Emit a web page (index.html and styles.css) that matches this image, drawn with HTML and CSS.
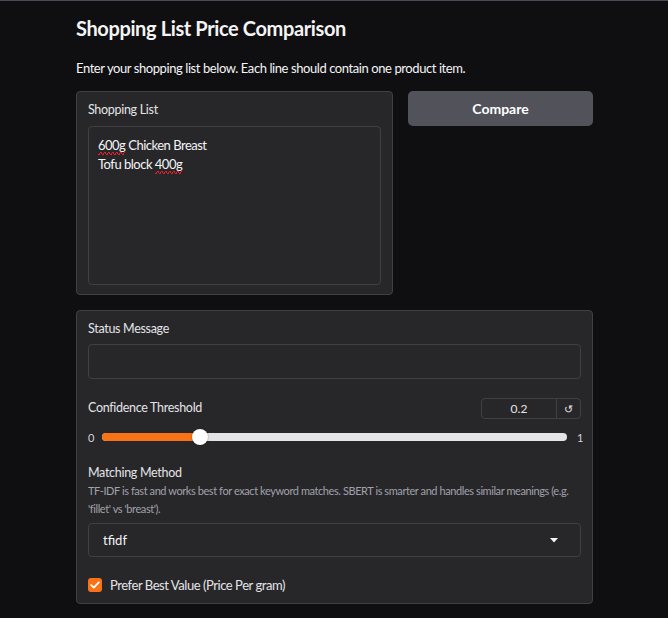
FILE: index.html
```html
<!DOCTYPE html>
<html>
<head>
<meta charset="utf-8">
<link rel="stylesheet" href="styles.css">
</head>
<body>
<div class="page">
  <div class="container">
    <h2 class="title">Shopping List Price Comparison</h2>
    <p class="desc">Enter your shopping list below. Each line should contain one product item.</p>
    <div class="row">
      <div class="block list-block">
        <div class="label">Shopping List</div>
        <div class="textarea">
          <div class="line"><span class="spell">600g</span> Chicken Breast</div>
          <div class="line">Tofu block <span class="spell">400g</span></div>
        </div>
      </div>
      <button class="compare">Compare</button>
    </div>
    <div class="block settings">
      <div class="label">Status Message</div>
      <div class="input"></div>

      <div class="conf-row">
        <div class="label conf-label">Confidence Threshold</div>
        <div class="numbox">
          <span class="num">0.2</span>
          <span class="reset">↺</span>
        </div>
      </div>
      <div class="slider-row">
        <span class="minmax">0</span>
        <div class="track">
          <div class="fill" style="width: 21%"></div>
          <div class="thumb" style="left: 21%"></div>
        </div>
        <span class="minmax">1</span>
      </div>

      <div class="label method">Matching Method</div>
      <div class="info">TF-IDF is fast and works best for exact keyword matches. SBERT is smarter and handles similar meanings (e.g. 'fillet' vs 'breast').</div>
      <div class="dropdown">
        <span>tfidf</span>
        <svg class="caret" width="8" height="5" viewBox="0 0 8 5"><path d="M0 0 H8 L4 4.5 Z" fill="#f4f4f5"/></svg>
      </div>

      <label class="check-row">
        <span class="checkbox">
          <svg width="10" height="8" viewBox="0 0 10 8"><path d="M1.2 4.2 L3.8 6.6 L8.8 1.4" fill="none" stroke="#fff" stroke-width="1.8" stroke-linecap="round" stroke-linejoin="round"/></svg>
        </span>
        <span class="check-label">Prefer Best Value (Price Per gram)</span>
      </label>
    </div>
  </div>
</div>
</body>
</html>
```

FILE: styles.css
```css
* { box-sizing: border-box; }
html, body {
  margin: 0;
  padding: 0;
  background: #0f0f11;
}
body {
  font-family: "Lato", "Noto Sans", sans-serif;
  color: #e4e4e7;
  width: 668px;
  height: 618px;
  overflow: hidden;
  border-top: 1px solid #4e4856;
}
.page {
  padding-left: 76px;
}
.container {
  width: 517px;
  display: flex;
  flex-direction: column;
}
.title {
  margin: 15px 0 0 0;
  font-size: 20px;
  line-height: 24px;
  font-weight: 700;
  letter-spacing: -0.38px;
  color: #f4f4f5;
}
.desc {
  margin: 19px 0 0 0;
  font-size: 13px;
  line-height: 18px;
  letter-spacing: -0.42px;
  color: #f4f4f5;
}
.row {
  display: flex;
  gap: 15px;
  margin-top: 14px;
  align-items: flex-start;
}
.block {
  background: #27272a;
  border: 1px solid #3f3f46;
  border-radius: 4px;
  padding: 10px 11px 9px 11px;
}
.list-block {
  width: 317px;
  height: 204px;
}
.label {
  font-size: 12.5px;
  line-height: 16px;
  letter-spacing: -0.3px;
  color: #e4e4e7;
}
.textarea {
  margin-top: 8px;
  height: 159px;
  border: 1px solid #3f3f46;
  border-radius: 4px;
  background: #27272a;
  padding: 9px 9px;
}
.line {
  font-size: 13px;
  line-height: 18px;
  letter-spacing: -0.5px;
  color: #f4f4f5;
}
.spell {
  display: inline-block;
  line-height: 16px;
  padding-bottom: 2px;
  background-image:
    linear-gradient(45deg, transparent 62%, #d9202c 62%, #d9202c 88%, transparent 88%),
    linear-gradient(135deg, transparent 62%, #d9202c 62%, #d9202c 88%, transparent 88%);
  background-size: 4px 3px;
  background-repeat: repeat-x;
  background-position: 0 100%, 2px 100%;
}
.compare {
  flex: 1;
  height: 35px;
  border: none;
  border-radius: 5px;
  background: #52525b;
  color: #ffffff;
  font-family: "Lato", "Noto Sans", sans-serif;
  font-weight: 700;
  font-size: 14px;
  padding: 0;
}
.settings {
  margin-top: 15px;
  display: flex;
  flex-direction: column;
  padding-bottom: 10px;
}
.input {
  margin-top: 7px;
  height: 35px;
  border: 1px solid #3f3f46;
  border-radius: 4px;
  background: #27272a;
}
.conf-row {
  margin-top: 19px;
  display: flex;
  justify-content: space-between;
  align-items: center;
}
.conf-label {
  position: relative;
  top: -1px;
}
.numbox {
  width: 100px;
  height: 21px;
  border: 1px solid #3f3f46;
  border-radius: 4px;
  display: flex;
  align-items: stretch;
}
.num {
  flex: 1;
  text-align: center;
  font-size: 12px;
  line-height: 19px;
  color: #e4e4e7;
  border-right: 1px solid #3f3f46;
}
.reset {
  width: 23px;
  text-align: center;
  font-size: 11px;
  line-height: 19px;
  color: #e4e4e7;
}
.slider-row {
  margin-top: 10px;
  height: 16px;
  display: flex;
  align-items: center;
  gap: 10px;
}
.minmax {
  font-size: 11px;
  color: #d4d4d8;
  width: 4px;
}
.track {
  position: relative;
  flex: 1;
  height: 8px;
  border-radius: 4px;
  background: #e4e4e7;
}
.fill {
  height: 8px;
  border-radius: 4px;
  background: #f97316;
}
.thumb {
  position: absolute;
  top: -4px;
  width: 16px;
  height: 16px;
  margin-left: -8px;
  border-radius: 50%;
  background: #ffffff;
  box-shadow: 0 0 2px rgba(0,0,0,0.4);
}
.method {
  margin-top: 20px;
}
.info {
  margin-top: 1px;
  font-size: 11px;
  line-height: 18px;
  letter-spacing: -0.42px;
  color: #a1a1aa;
}
.dropdown {
  margin-top: 5px;
  height: 34px;
  border: 1px solid #3f3f46;
  border-radius: 4px;
  display: flex;
  align-items: center;
  justify-content: space-between;
  padding: 0 22px 0 14px;
  font-size: 13px;
  color: #f4f4f5;
}
.check-row {
  margin-top: 20px;
  display: flex;
  align-items: center;
  gap: 8px;
  height: 16px;
}
.checkbox {
  width: 14px;
  height: 14px;
  border-radius: 3px;
  background: #f97316;
  display: flex;
  align-items: center;
  justify-content: center;
}
.check-label {
  font-size: 13px;
  letter-spacing: -0.45px;
  color: #e4e4e7;
}
```
